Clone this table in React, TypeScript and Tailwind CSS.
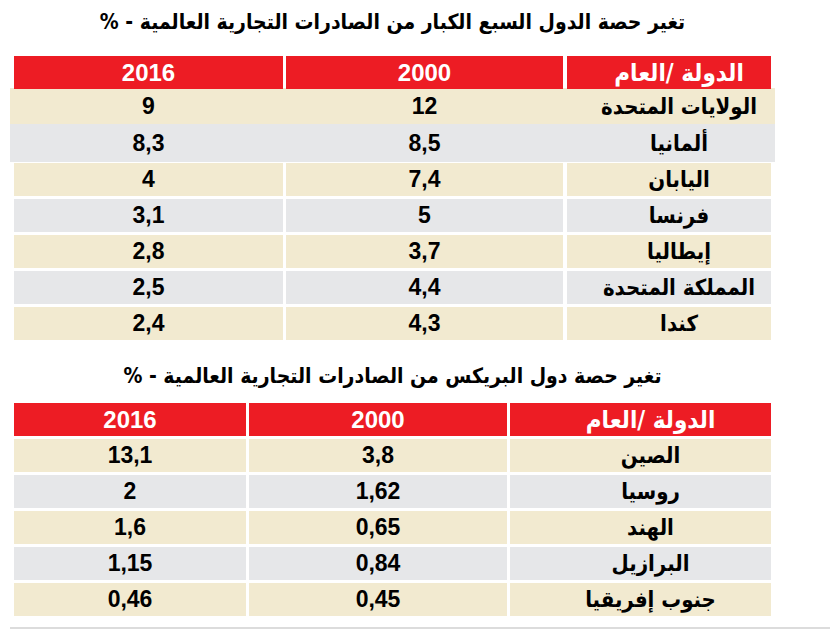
const arabic = "font-['DejaVu_Sans_Condensed','DejaVu_Sans',sans-serif] font-bold";
const digits = "font-['Liberation_Sans',Arial,sans-serif] font-bold";

type Row = { country: string; y2000: string; y2016: string };

const g7: Row[] = [
  { country: 'الولايات المتحدة', y2000: '12', y2016: '9' },
  { country: 'ألمانيا', y2000: '8,5', y2016: '8,3' },
  { country: 'اليابان', y2000: '7,4', y2016: '4' },
  { country: 'فرنسا', y2000: '5', y2016: '3,1' },
  { country: 'إيطاليا', y2000: '3,7', y2016: '2,8' },
  { country: 'المملكة المتحدة', y2000: '4,4', y2016: '2,5' },
  { country: 'كندا', y2000: '4,3', y2016: '2,4' },
];

const brics: Row[] = [
  { country: 'الصين', y2000: '3,8', y2016: '13,1' },
  { country: 'روسيا', y2000: '1,62', y2016: '2' },
  { country: 'الهند', y2000: '0,65', y2016: '1,6' },
  { country: 'البرازيل', y2000: '0,84', y2016: '1,15' },
  { country: 'جنوب إفريقيا', y2000: '0,45', y2016: '0,46' },
];

function Title({ text, className }: { text: string; className: string }) {
  return (
    <div className={`flex w-[757px] justify-center ${className}`}>
      <h2 dir="rtl" className={`${arabic} text-[21px] leading-[32px] text-black`}>
        {text}
      </h2>
    </div>
  );
}

function Cells({
  row,
  widths,
  gaps,
}: {
  row: Row;
  widths: [string, string, string];
  gaps: [string, string];
}) {
  return (
    <>
      <div className={`${widths[0]} flex items-center justify-center pl-5 ${arabic} text-[22px] text-black`}>
        {row.country}
      </div>
      <div className={gaps[0]} />
      <div className={`${widths[1]} flex items-center justify-center ${digits} text-[23px] text-black`}>
        {row.y2000}
      </div>
      <div className={gaps[1]} />
      <div className={`${widths[2]} flex items-center justify-center ${digits} text-[23px] text-black`}>
        {row.y2016}
      </div>
    </>
  );
}

function StripedRow({
  row,
  index,
  widths,
  gaps,
}: {
  row: Row;
  index: number;
  widths: [string, string, string];
  gaps: [string, string];
}) {
  const bg = index % 2 === 0 ? 'bg-[#f2ead0]' : 'bg-[#e6e7e9]';
  return (
    <div dir="rtl" className="flex h-[33px]">
      <div className={`${widths[0]} ${bg} flex items-center justify-center pl-5 ${arabic} text-[22px] text-black`}>
        {row.country}
      </div>
      <div className={gaps[0]} />
      <div className={`${widths[1]} ${bg} flex items-center justify-center ${digits} text-[23px] text-black`}>
        {row.y2000}
      </div>
      <div className={gaps[1]} />
      <div className={`${widths[2]} ${bg} flex items-center justify-center ${digits} text-[23px] text-black`}>
        {row.y2016}
      </div>
    </div>
  );
}

function HeaderRow({ widths, gaps }: { widths: [string, string, string]; gaps: [string, string] }) {
  return (
    <div dir="rtl" className="flex h-[33px]">
      <div className={`${widths[0]} bg-[#ed1c24] flex items-center justify-center pl-5 ${arabic} text-[24px] text-white`}>
        الدولة /العام
      </div>
      <div className={gaps[0]} />
      <div className={`${widths[1]} bg-[#ed1c24] flex items-center justify-center ${digits} text-[24px] text-white`}>
        2000
      </div>
      <div className={gaps[1]} />
      <div className={`${widths[2]} bg-[#ed1c24] flex items-center justify-center ${digits} text-[24px] text-white`}>
        2016
      </div>
    </div>
  );
}

export default function App() {
  const w1: [string, string, string] = ['w-[204px]', 'w-[277px]', 'w-[269px]'];
  const gp1: [string, string] = ['w-[4px]', 'w-[3px]'];
  const w2: [string, string, string] = ['w-[261px]', 'w-[258px]', 'w-[232px]'];
  const gp2: [string, string] = ['w-[3px]', 'w-[3px]'];

  return (
    <div className="w-[830px] h-[630px] bg-white overflow-hidden">
      <div className="ml-[14px] w-[757px]">
        <Title
          text="تغير حصة الدول السبع الكبار من الصادرات التجارية العالمية - %"
          className="h-[56px] pt-[6px]"
        />
        <HeaderRow widths={w1} gaps={gp1} />

        {/* first two rows sit in one wider block without separators */}
        <div className="-mx-[4px]">
          <div dir="rtl" className="flex h-[36px] bg-[#f2ead0] px-[4px] -mt-[1px]">
            <Cells row={g7[0]} widths={w1} gaps={gp1} />
          </div>
          <div dir="rtl" className="flex h-[38px] bg-[#e6e7e9] px-[4px]">
            <Cells row={g7[1]} widths={w1} gaps={gp1} />
          </div>
        </div>

        <div className="mt-[1px] flex flex-col gap-[3px]">
          {g7.slice(2).map((row, i) => (
            <StripedRow key={row.country} row={row} index={i} widths={w1} gaps={gp1} />
          ))}
        </div>

        <Title
          text="تغير حصة دول البريكس من الصادرات التجارية العالمية - %"
          className="h-[63px] pt-[20px]"
        />
        <div className="flex flex-col gap-[3px]">
          <HeaderRow widths={w2} gaps={gp2} />
          {brics.map((row, i) => (
            <StripedRow key={row.country} row={row} index={i} widths={w2} gaps={gp2} />
          ))}
        </div>
      </div>
      <div className="ml-[10px] mt-[11px] h-[2px] bg-[#dcdcdc]" />
    </div>
  );
}
